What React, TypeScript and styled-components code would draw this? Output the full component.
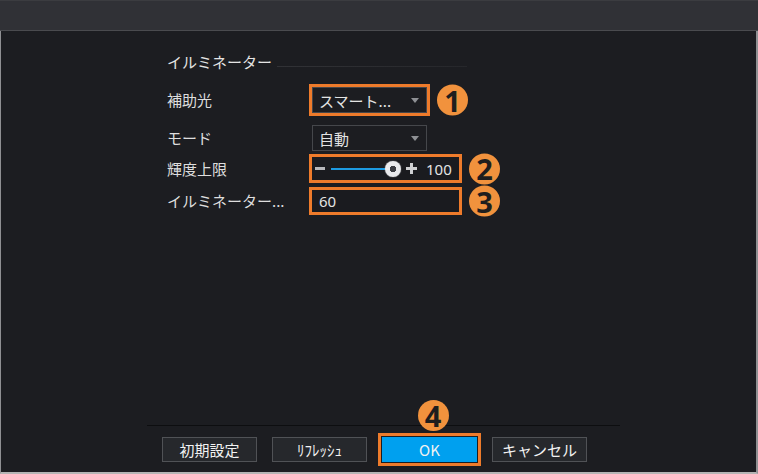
import React from "react";
import styled, { createGlobalStyle } from "styled-components";

const Global = createGlobalStyle`
  html, body { margin: 0; padding: 0; background: #1c1d21; }
  * { box-sizing: border-box; }
`;

const ORANGE = "#ee7b2b";

const Window = styled.div`
  width: 758px;
  height: 474px;
  display: flex;
  flex-direction: column;
  background: #1c1d21;
  font-family: "Noto Sans CJK JP", "Noto Sans", sans-serif;
  color: #e4e4e4;
  overflow: hidden;
`;

const TitleBar = styled.div`
  height: 31px;
  flex: 0 0 31px;
  background: #303136;
  border-top: 1px solid #3b3c40;
  border-bottom: 1px solid #4a4b4f;
`;

const Body = styled.main`
  flex: 1;
  display: flex;
  flex-direction: column;
  border-left: 1px solid #8f9093;
  border-right: 2px solid #8f9093;
  border-bottom: 2px solid #b4b4b4;
`;

const Form = styled.section`
  padding-left: 166px;
  display: flex;
  flex-direction: column;
`;

const SectionHeader = styled.div`
  margin-top: 21px;
  height: 20px;
  display: flex;
  align-items: center;
  font-size: 15px;
  line-height: 20px;
`;

const HeaderRule = styled.div`
  margin-left: 5px;
  margin-top: 8px;
  width: 190px;
  height: 1px;
  background: linear-gradient(90deg, #313236, #26272b);
`;

const Row = styled.div<{ $h: number; $mt: number }>`
  height: ${(p) => p.$h}px;
  margin-top: ${(p) => p.$mt}px;
  display: grid;
  grid-template-columns: 145px auto;
  align-items: center;
`;

const Label = styled.span`
  font-size: 15px;
  line-height: 20px;
  color: #dedede;
  white-space: nowrap;
`;

const Control = styled.div<{ $marked?: boolean }>`
  position: relative;
  justify-self: start;
  ${(p) => (p.$marked ? `outline: 3px solid ${ORANGE};` : "")}
`;

const Select = styled.div`
  width: 115px;
  height: 26px;
  border: 1px solid #45474b;
  background: #1c1d21;
  display: flex;
  align-items: center;
  justify-content: space-between;
  padding: 0 7px 0 6px;
  font-size: 15px;
`;

const Arrow = styled.span`
  width: 0;
  height: 0;
  border-left: 4px solid transparent;
  border-right: 4px solid transparent;
  border-top: 5px solid #8e9094;
`;

const SliderBox = styled.div`
  width: 147px;
  height: 23px;
  display: flex;
  align-items: center;
  padding-left: 3px;
  background: #1a1b1f;
`;

const Minus = styled.span`
  width: 10px;
  height: 3px;
  background: #b8b9bc;
`;

const Track = styled.div`
  margin-left: 6px;
  width: 58px;
  height: 2px;
  background: #1d9be2;
`;

const Thumb = styled.span`
  margin-left: -4px;
  width: 16px;
  height: 16px;
  border-radius: 50%;
  background: radial-gradient(circle, #3b3d42 0 3px, #e9eaec 3.5px);
  box-shadow: 0 0 1px #fff;
  display: block;
`;

const Plus = styled.span`
  position: relative;
  margin-left: 5px;
  width: 11px;
  height: 11px;
  &::before, &::after {
    content: "";
    position: absolute;
    background: #cfd0d2;
  }
  &::before { left: 0; right: 0; top: 4px; height: 3px; }
  &::after { top: 0; bottom: 0; left: 4px; width: 3px; }
`;

const SliderValue = styled.span`
  margin-left: 9px;
  font-family: "Noto Sans", sans-serif;
  font-size: 15px;
  line-height: 20px;
`;

const TextInput = styled.div`
  width: 147px;
  height: 22px;
  display: flex;
  align-items: center;
  padding-left: 7px;
  font-family: "Noto Sans", sans-serif;
  font-size: 15px;
  background: #1a1b1f;
`;

const Badge = styled.span<{ $above?: boolean }>`
  position: absolute;
  width: 31px;
  height: 31px;
  border-radius: 50%;
  background: #f1923d;
  color: #1e1e1e;
  font-family: "Noto Sans", sans-serif;
  font-weight: 700;
  font-size: 29px;
  line-height: 24px;
  display: flex;
  align-items: center;
  justify-content: center;
  ${(p) =>
    p.$above
      ? `left: 50%; bottom: calc(100% + 6px); transform: translateX(-12px);`
      : `left: calc(100% + 10px); top: 50%; transform: translateY(-50%);`}
`;

const Footer = styled.footer`
  margin-top: auto;
  margin-left: 146px;
  width: 473px;
  border-top: 1px solid #0d0e10;
  padding: 11px 0 10px 15px;
  display: flex;
  gap: 15px;
`;

const Button = styled.button<{ $primary?: boolean }>`
  position: relative;
  width: 95px;
  height: 25px;
  margin: 0;
  padding: 0;
  border: ${(p) => (p.$primary ? "none" : "1px solid #505256")};
  background: ${(p) => (p.$primary ? "#00a0ef" : "#26282c")};
  color: #f2f2f2;
  font-family: "Noto Sans CJK JP", "Noto Sans", sans-serif;
  font-size: 15px;
  line-height: 23px;
  ${(p) => (p.$primary ? `outline: 3px solid ${ORANGE}; outline-offset: 1px;` : "")}
`;

export default function App() {
  return (
    <>
      <Global />
      <Window>
        <TitleBar />
        <Body>
          <Form>
            <SectionHeader>
              イルミネーター
              <HeaderRule />
            </SectionHeader>
            <Row $h={32} $mt={12}>
              <Label>補助光</Label>
              <Control $marked>
                <Select>
                  <span>スマート...</span>
                  <Arrow />
                </Select>
                <Badge>1</Badge>
              </Control>
            </Row>
            <Row $h={26} $mt={9}>
              <Label>モード</Label>
              <Control>
                <Select>
                  <span>自動</span>
                  <Arrow />
                </Select>
              </Control>
            </Row>
            <Row $h={29} $mt={3}>
              <Label>輝度上限</Label>
              <Control $marked>
                <SliderBox>
                  <Minus />
                  <Track />
                  <Thumb />
                  <Plus />
                  <SliderValue>100</SliderValue>
                </SliderBox>
                <Badge>2</Badge>
              </Control>
            </Row>
            <Row $h={28} $mt={4}>
              <Label>イルミネーター...</Label>
              <Control $marked>
                <TextInput>60</TextInput>
                <Badge>3</Badge>
              </Control>
            </Row>
          </Form>
          <Footer>
            <Button>初期設定</Button>
            <Button>ﾘﾌﾚｯｼｭ</Button>
            <Button $primary>
              OK
              <Badge $above>4</Badge>
            </Button>
            <Button>キャンセル</Button>
          </Footer>
        </Body>
      </Window>
    </>
  );
}
